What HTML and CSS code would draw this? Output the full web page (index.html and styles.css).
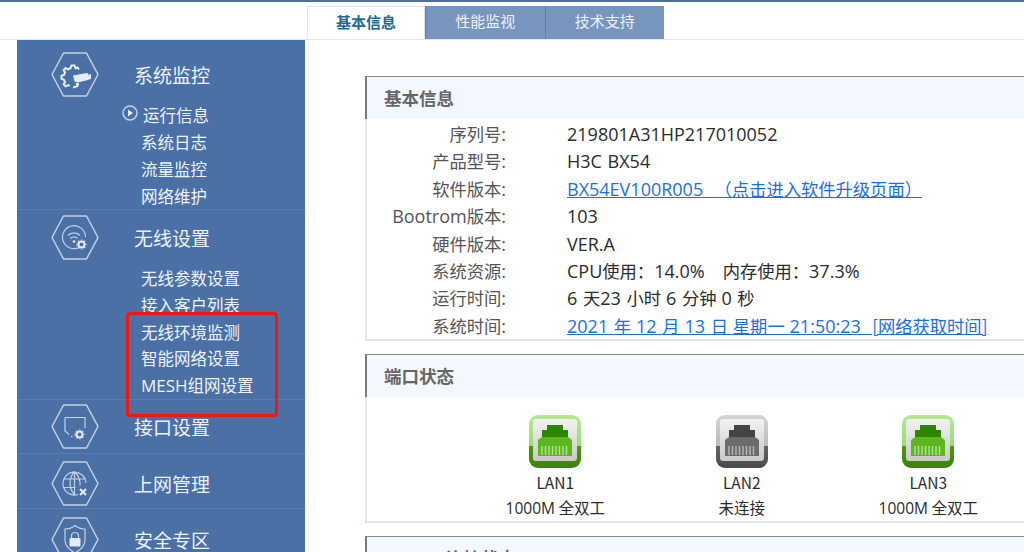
FILE: index.html
```html
<!DOCTYPE html>
<html lang="zh">
<head>
    <meta charset="UTF-8">
    <meta name="viewport" content="width=device-width, initial-scale=1.0">
    <title>H3C BX54</title>
    <link rel="stylesheet" href="styles.css">
</head>
<body>
    <div class="top-bar"></div>

    <div class="tabs">
        <div class="tab active">基本信息</div>
        <div class="tab">性能监视</div>
        <div class="tab">技术支持</div>
    </div>

    <div class="main">
        <div class="sidebar">
            <div class="menu-group">
                <div class="menu-head">
                    <svg class="hex" viewBox="0 0 48 45">
                        <polygon class="hex-line" points="1,22.5 12.5,1 35.5,1 47,22.5 35.5,44 12.5,44"/>
                        <path class="glyph-bold" d="M28 17.500l-1.500-2-2 .8-1-2.800h-3l-1 2.800-2.600 1-2.400-1.200-1.800 2 1.300 2.400-1 2.400-2.500.9v3l2.500.9 1 2.400-1.300 2.300 2 2 2.400-1.200 1.600.7"/>
                        <path class="glyph-fill" d="M22 23.500l14-2.500 1.500 1-.5 6-10.500 2.500-3-1zM37.500 23l2.500-1v5l-3 .8zM25 31h3v2l-1 2-5 1.500v-2l3-1z"/>
                    </svg>
                    <span class="menu-title">系统监控</span>
                </div>
                <ul class="sub-list">
                    <li class="sub-item current">
                        <svg class="bullet" viewBox="0 0 16 16">
                            <circle class="hex-line" cx="8" cy="8" r="7"/>
                            <path class="glyph-fill" d="M6 4.500l5 3.500-5 3.500z"/>
                        </svg>
                        运行信息
                    </li>
                    <li class="sub-item">系统日志</li>
                    <li class="sub-item">流量监控</li>
                    <li class="sub-item">网络维护</li>
                </ul>
            </div>

            <div class="menu-group">
                <div class="menu-head">
                    <svg class="hex" viewBox="0 0 48 45">
                        <polygon class="hex-line" points="1,22.5 12.5,1 35.5,1 47,22.5 35.5,44 12.5,44"/>
                        <path class="glyph" d="M28 32.500A11.500 11.500 0 1 1 34.500 22M17 20.500a8 8 0 0 1 12 0M19.500 23.500a4.500 4.500 0 0 1 7 0"/>
                        <circle class="glyph-fill" cx="23" cy="26.500" r="1.300"/>
                        <circle class="glyph-bold" cx="30.500" cy="29.500" r="3"/>
                        <path class="glyph" stroke-dasharray="1.500 1.800" d="M26 29.500a4.500 4.500 0 1 0 9 0a4.500 4.500 0 1 0-9 0"/>
                    </svg>
                    <span class="menu-title">无线设置</span>
                </div>
                <ul class="sub-list">
                    <li class="sub-item">无线参数设置</li>
                    <li class="sub-item">接入客户列表</li>
                    <li class="sub-item">无线环境监测</li>
                    <li class="sub-item">智能网络设置</li>
                    <li class="sub-item"><span class="lat-menu">MESH</span>组网设置</li>
                </ul>
            </div>

            <div class="menu-group">
                <div class="menu-head">
                    <svg class="hex" viewBox="0 0 48 45">
                        <polygon class="hex-line" points="1,22.5 12.5,1 35.5,1 47,22.5 35.5,44 12.5,44"/>
                        <path class="glyph" d="M14 13.500h20V24M14 13.500V27l4 3.500M20 32l1.500 1"/>
                        <circle class="glyph-bold" cx="28.500" cy="30.500" r="3"/>
                        <path class="glyph" stroke-dasharray="1.500 1.800" d="M24 30.500a4.500 4.500 0 1 0 9 0a4.500 4.500 0 1 0-9 0"/>
                    </svg>
                    <span class="menu-title">接口设置</span>
                </div>
            </div>

            <div class="menu-group">
                <div class="menu-head">
                    <svg class="hex" viewBox="0 0 48 45">
                        <polygon class="hex-line" points="1,22.5 12.5,1 35.5,1 47,22.5 35.5,44 12.5,44"/>
                        <path class="glyph" d="M27 33.500a11.500 11.500 0 1 1 8-11.500M12.500 18h21M12.500 26.500h12M23.500 10.500c-6 6-6 17 0 23M23.500 10.500c5 5 6 11 5.500 14M23.500 10.500v23"/>
                        <path class="glyph-bold" d="M29 28l6 6M35 28l-6 6"/>
                    </svg>
                    <span class="menu-title">上网管理</span>
                </div>
            </div>

            <div class="menu-group">
                <div class="menu-head">
                    <svg class="hex" viewBox="0 0 48 45">
                        <polygon class="hex-line" points="1,22.5 12.5,1 35.5,1 47,22.5 35.5,44 12.5,44"/>
                        <path class="glyph" d="M24 8.500c3 2.500 6.500 3.500 10 3.500v11c0 6-4.500 10-10 13-5.500-3-10-7-10-13V12c3.500 0 7-1 10-3.500z"/>
                        <path class="glyph" d="M20.500 21v-2a3.500 3.500 0 0 1 7 0v2"/>
                        <rect class="glyph-fill" x="18.500" y="21" width="11" height="8.500" rx="1"/>
                    </svg>
                    <span class="menu-title">安全专区</span>
                </div>
            </div>
        </div>

        <div class="content">
            <div class="panel">
                <div class="panel-head">基本信息</div>
                <div class="info-list">
                    <div class="info-row"><div class="info-label">序列号<span class="lat">:</span></div><div class="info-value"><span class="lat">219801A31HP217010052</span></div></div>
                    <div class="info-row"><div class="info-label">产品型号<span class="lat">:</span></div><div class="info-value"><span class="lat">H3C BX54</span></div></div>
                    <div class="info-row"><div class="info-label">软件版本<span class="lat">:</span></div><div class="info-value"><a class="link" href="#"><span class="lat">BX54EV100R005&nbsp; </span>（点击进入软件升级页面）</a></div></div>
                    <div class="info-row"><div class="info-label"><span class="lat">Bootrom</span>版本<span class="lat">:</span></div><div class="info-value"><span class="lat">103</span></div></div>
                    <div class="info-row"><div class="info-label">硬件版本<span class="lat">:</span></div><div class="info-value"><span class="lat">VER.A</span></div></div>
                    <div class="info-row"><div class="info-label">系统资源<span class="lat">:</span></div><div class="info-value"><span class="lat">CPU</span>使用：<span class="lat">14.0%</span><span class="spacer"></span>内存使用：<span class="lat">37.3%</span></div></div>
                    <div class="info-row"><div class="info-label">运行时间<span class="lat">:</span></div><div class="info-value"><span class="lat">6 </span>天<span class="lat">23 </span>小时 <span class="lat">6 </span>分钟 <span class="lat">0 </span>秒</div></div>
                    <div class="info-row"><div class="info-label">系统时间<span class="lat">:</span></div><div class="info-value"><a class="link" href="#"><span class="lat">2021 </span>年 <span class="lat">12 </span>月 <span class="lat">13 </span>日 星期一 <span class="lat">21:50:23&nbsp; </span>[网络获取时间]</a></div></div>
                </div>
            </div>

            <div class="panel">
                <div class="panel-head">端口状态</div>
                <div class="port-list">
                    <div class="port">
                        <div class="port-icon up">
                            <svg class="plug" viewBox="0 0 52 53">
                                <path class="plug-dark" d="M18 10h16v5h5v7H13v-7h5z"/>
                                <path class="plug-body" d="M13 22h26l4 3v16H9V25z"/>
                                <path class="plug-pins" d="M13 31v9M16.500 31v9M20 31v9M23.500 31v9M27 31v9M30.500 31v9M34 31v9M37.500 31v9"/>
                            </svg>
                        </div>
                        <div class="port-name">LAN1</div>
                        <div class="port-state"><span class="lat-sm">1000M</span> 全双工</div>
                    </div>
                    <div class="port">
                        <div class="port-icon down">
                            <svg class="plug" viewBox="0 0 52 53">
                                <path class="plug-dark" d="M18 10h16v5h5v7H13v-7h5z"/>
                                <path class="plug-body" d="M13 22h26l4 3v16H9V25z"/>
                                <path class="plug-pins" d="M13 31v9M16.500 31v9M20 31v9M23.500 31v9M27 31v9M30.500 31v9M34 31v9M37.500 31v9"/>
                            </svg>
                        </div>
                        <div class="port-name">LAN2</div>
                        <div class="port-state">未连接</div>
                    </div>
                    <div class="port">
                        <div class="port-icon up">
                            <svg class="plug" viewBox="0 0 52 53">
                                <path class="plug-dark" d="M18 10h16v5h5v7H13v-7h5z"/>
                                <path class="plug-body" d="M13 22h26l4 3v16H9V25z"/>
                                <path class="plug-pins" d="M13 31v9M16.500 31v9M20 31v9M23.500 31v9M27 31v9M30.500 31v9M34 31v9M37.500 31v9"/>
                            </svg>
                        </div>
                        <div class="port-name">LAN3</div>
                        <div class="port-state"><span class="lat-sm">1000M</span> 全双工</div>
                    </div>
                </div>
            </div>

            <div class="panel">
                <div class="panel-head"><span class="lat">WAN</span>口连接状态</div>
            </div>
        </div>
    </div>

    <div class="red-mark"></div>
</body>
</html>
```

FILE: styles.css
```css
:root {
    --blue: #4a70a5;
    --tab-blue: #7795bf;
    --line: #e1e6f1;
    --menu-text: #eef2f8;
    --icon-line: #c3d1e4;
    --dark: #2b2b2b;
    --gray: #555;
}

html, body {
    height: 552px;
    overflow: hidden;
}

body {
    position: relative;
    margin: 0;
    background: white;
    color: var(--dark);
    font-family: "Noto Sans CJK SC", "Open Sans", sans-serif;
    font-size: 16px;
}

.top-bar {
    height: 2px;
    background: var(--blue);
}

/* tabs */
.tabs {
    display: flex;
    margin: 4px 0 0 307px;
    height: 33px;
}

.tab {
    box-sizing: border-box;
    width: 119.5px;
    line-height: 29px;
    text-align: center;
    font-size: 15px;
    color: #edf1f7;
    background: var(--tab-blue);
    border-left: 1px solid #6c7f99;
}

.tab.active {
    width: 118px;
    color: #1b6a93;
    font-weight: 700;
    background: white;
    border: 1px solid var(--line);
    border-bottom: none;
}

/* layout */
.main {
    display: flex;
    border-top: 1px solid var(--line);
    height: 513px;
}

/* left menu */
.sidebar {
    flex: none;
    width: 288px;
    margin-left: 17px;
    background: var(--blue);
    overflow: hidden;
}

.menu-group {
    border-bottom: 1px solid #5a7daf;
}

.menu-group:nth-child(1) .menu-head { padding-top: 12px; }
.menu-group:nth-child(2) .menu-head { padding-top: 5px; }
.menu-group:nth-child(3) .menu-head { padding-top: 4px; padding-bottom: 4px; }
.menu-group:nth-child(4) .menu-head { padding-top: 7px; padding-bottom: 2px; }
.menu-group:nth-child(5) .menu-head { padding-top: 8px; }

.menu-head {
    display: flex;
    align-items: center;
    gap: 36px;
    padding-left: 34px;
}

.hex {
    flex: none;
    width: 48px;
    height: 45px;
}

.hex-line {
    fill: none;
    stroke: var(--icon-line);
    stroke-width: 1.5;
    stroke-linejoin: round;
}

.glyph {
    fill: none;
    stroke: var(--icon-line);
    stroke-width: 1.2;
}

.glyph-bold {
    fill: none;
    stroke: #e6ecf5;
    stroke-width: 2;
}

.glyph-fill {
    fill: #e6ecf5;
}

.menu-title {
    margin-left: -1px;
    font-size: 19px;
    color: var(--menu-text);
}

.sub-list {
    list-style: none;
    margin: 0;
    padding: 4.4px 0 0 124px;
}

.sub-item {
    display: flex;
    align-items: center;
    height: 26.9px;
    font-size: 16.500px;
    color: var(--menu-text);
}

.lat-menu {
    font-family: "Open Sans", sans-serif;
    font-size: 17px;
}

.current {
    margin-left: -19px;
    gap: 5px;
}

.bullet {
    width: 16px;
    height: 16px;
    margin-top: -3px;
}

/* right content */
.content {
    flex: 1;
    min-width: 0;
    padding: 36px 0 0 60px;
}

.panel {
    margin-bottom: 13px;
    border-left: 2px solid var(--line);
    border-bottom: 2px solid var(--line);
}

.panel-head {
    height: 42px;
    margin-left: -2px;
    padding-left: 17px;
    line-height: 42px;
    font-size: 17.500px;
    font-weight: 700;
    color: #666;
    background: #f3f7fe;
    border-top: 1px solid #8a8a8a;
    border-left: 2px solid #7a7a7a;
}

.info-list {
    padding-top: 1px;
    font-size: 17.300px;
}

.info-row {
    display: grid;
    grid-template-columns: 139px 1fr;
    column-gap: 61px;
    height: 27.4px;
    line-height: 27.4px;
}

.info-label {
    text-align: right;
    color: var(--gray);
    white-space: nowrap;
}

.info-value {
    white-space: nowrap;
    word-spacing: 1px;
}

.lat {
    font-family: "Open Sans", sans-serif;
    font-size: 18px;
}

.lat-sm {
    font-family: "Open Sans", sans-serif;
    font-size: 15.500px;
}

.link {
    color: #1a6fe8;
    text-decoration: underline;
}

.spacer {
    display: inline-block;
    width: 18px;
}

/* ports */
.port-list {
    display: flex;
    padding: 18px 0 0 95px;
    height: 106px;
}

.port {
    flex: none;
    width: 186.500px;
    text-align: center;
    font-size: 15.500px;
}

.port-icon {
    position: relative;
    width: 52px;
    height: 53px;
    margin: 0 auto 1px;
    border-radius: 9px;
    overflow: hidden;
}

.port-icon::before {
    content: "";
    position: absolute;
    inset: 4px 4px 7px;
    background: linear-gradient(#f2f2f2, #c9c9c9);
    border-radius: 3px;
}

.port-icon.up {
    background: linear-gradient(#b4e996 0, #98dd73 58%, #4a9a10 58%, #3a8404 100%);
}

.port-icon.down {
    background: linear-gradient(#d4d4d4 0, #bcbcbc 58%, #666 58%, #4a4a4a 100%);
}

.plug {
    position: absolute;
    inset: 0;
    width: 52px;
    height: 53px;
}

.up .plug-dark { fill: #2f8404; }
.up .plug-body { fill: #5cb61e; }
.up .plug-pins { stroke: #b6e09a; }
.down .plug-dark { fill: #444; }
.down .plug-body { fill: #6c6c6c; }
.down .plug-pins { stroke: #b8b8b8; }

.plug-pins {
    stroke-width: 1.4;
}

.port-name {
    line-height: 26px;
}

.port-state {
    line-height: 24px;
}

/* red box drawn on top of the screenshot */
.red-mark {
    position: absolute;
    left: 126px;
    top: 312px;
    width: 146px;
    height: 99px;
    border: 3px solid #f4150d;
    border-radius: 4px;
}
```
